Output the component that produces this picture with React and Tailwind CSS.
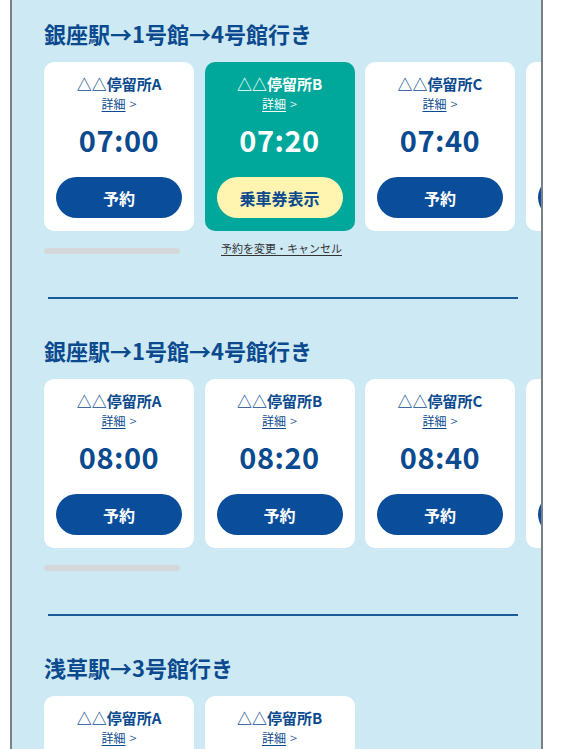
const routes = [
  {
    title: "銀座駅→1号館→4号館行き",
    stops: [
      { name: "△△停留所A", time: "07:00" },
      { name: "△△停留所B", time: "07:20", booked: true },
      { name: "△△停留所C", time: "07:40" },
      { name: "△△停留所D", time: "08:00" },
    ],
  },
  {
    title: "銀座駅→1号館→4号館行き",
    stops: [
      { name: "△△停留所A", time: "08:00" },
      { name: "△△停留所B", time: "08:20" },
      { name: "△△停留所C", time: "08:40" },
      { name: "△△停留所D", time: "09:00" },
    ],
  },
  {
    title: "浅草駅→3号館行き",
    stops: [
      { name: "△△停留所A", time: "09:00" },
      { name: "△△停留所B", time: "09:20" },
    ],
  },
];

function StopCard({ stop }) {
  const booked = stop.booked;
  return (
    <div
      className={
        "w-[150px] shrink-0 rounded-[10px] flex flex-col items-center px-3 pt-[12px] pb-[13px] " +
        (booked ? "bg-[#00a89c] text-white" : "bg-white text-[#0b4a8e]")
      }
    >
      <div className="text-[15px] leading-[20px] font-bold">{stop.name}</div>
      <div className="text-[12px] leading-[18px] mt-[1px]">
        <span className="underline underline-offset-2">詳細</span>
        <span className="ml-1 text-[13px] font-light">&gt;</span>
      </div>
      <div className="text-[29px] leading-[36px] font-bold mt-[8px] tracking-[0.5px]">
        {stop.time}
      </div>
      {booked ? (
        <button className="mt-[20px] w-full h-[41px] rounded-full bg-[#fff5b1] text-[#0b4a8e] text-[16px] font-bold flex items-center justify-center">
          乗車券表示
        </button>
      ) : (
        <button className="mt-[20px] w-full h-[41px] rounded-full bg-[#0a4e9b] text-white text-[16px] font-bold flex items-center justify-center">
          予約
        </button>
      )}
    </div>
  );
}

function RouteSection({ route, last }) {
  const hasBooking = route.stops.some((s) => s.booked);
  return (
    <section className="pt-[18px]">
      <h2 className="pl-[32px] text-[22px] leading-[30px] font-bold text-[#0b4a8e]">
        {route.title}
      </h2>

      <div className="mt-[14px] overflow-hidden">
        <div className="flex gap-[10.5px] pl-[32px]">
          {route.stops.map((s, i) => (
            <StopCard key={i} stop={s} />
          ))}
        </div>
      </div>

      {route.stops.length > 2 && (
        <div className="pl-[32px] mt-[16px] flex items-center h-[8px]">
          <div className="w-[136px] h-[6px] rounded-full bg-[#d5d8da]" />
          {hasBooking && (
            <a className="ml-[41px] text-[11px] leading-[14px] text-[#333] underline underline-offset-2 -mt-[7px]">
              予約を変更・キャンセル
            </a>
          )}
        </div>
      )}

      {!last && (
        <div className="ml-[36px] w-[470px] h-[2px] bg-[#1b5b9b] mt-[42px] mb-[18px]" />
      )}
    </section>
  );
}

export default function App() {
  return (
    <div className="w-[576px] min-h-[749px] bg-white font-['Noto_Sans_CJK_JP','Noto_Sans',sans-serif]">
      <div className="ml-[10px] w-[533px] min-h-[749px] bg-[#cde9f4] border-x-2 border-[#7b8085]">
        {routes.map((r, i) => (
          <RouteSection key={i} route={r} last={i === routes.length - 1} />
        ))}
      </div>
    </div>
  );
}
